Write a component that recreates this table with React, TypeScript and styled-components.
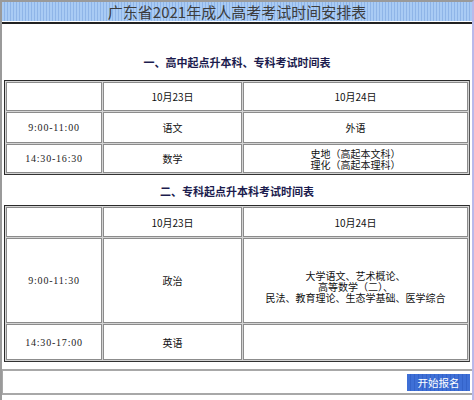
import React from "react";
import styled, { createGlobalStyle } from "styled-components";

const Global = createGlobalStyle`
  html, body { margin: 0; padding: 0; background: #fff; }
  body { font-family: "Noto Sans CJK SC", "Liberation Sans", sans-serif; }
`;

const Frame = styled.div`
  box-sizing: border-box;
  width: 474px;
  height: 400px;
  border-left: 2px solid #9a9a9a;
  border-right: 2px solid #b9b9ea;
  border-top: 2px solid #9a9a9a;
  display: flex;
  flex-direction: column;
  background: #fff;
`;

const TitleBar = styled.div`
  height: 19px;
  background: repeating-linear-gradient(
    90deg,
    #a9cbf4 0px,
    #a9cbf4 2px,
    #8fb5e8 2px,
    #8fb5e8 3px
  );
  border-bottom: 1px solid #fff;
  box-shadow: 0 2px 0 #222;
  margin-bottom: 2px;
  display: flex;
  align-items: center;
  justify-content: center;
  font-size: 15px;
  line-height: 19px;
  color: #3c3c3c;
`;

const Body = styled.div`
  display: flex;
  flex-direction: column;
  padding: 0 2px 0 2px;
  flex: 1;
`;

const Heading = styled.div<{ $top: number; $bottom: number }>`
  margin-top: ${(p) => p.$top}px;
  margin-bottom: ${(p) => p.$bottom}px;
  text-align: center;
  font-size: 11px;
  font-weight: bold;
  line-height: 14px;
  color: #1c1c4e;
`;

const Table = styled.div<{ $rows: string }>`
  display: grid;
  grid-template-columns: 96px 139px 1fr;
  grid-template-rows: ${(p) => p.$rows};
  gap: 1px;
  padding: 1px;
  background: #d4d4d4;
  border: 1px solid #2a2a2a;
  border-right-color: #555;
  border-bottom-color: #333;
`;

const Cell = styled.div<{ $lead?: boolean }>`
  box-sizing: border-box;
  border: 1px solid #8c8c8c;
  background: #fff;
  display: flex;
  flex-direction: column;
  align-items: center;
  justify-content: center;
  text-align: center;
  font-size: 10px;
  line-height: 11px;
  color: #111;
  padding-top: ${(p) => (p.$lead ? "11px" : "0")};
`;

const Line = styled.span`
  display: block;
  height: 11px;
  line-height: 11px;
`;

const Time = styled.span`
  font-family: "Liberation Serif", serif;
  font-size: 10px;
  letter-spacing: 0.8px;
  color: #222;
`;

const BottomBar = styled.div`
  margin-top: 7px;
  margin-left: -2px;
  margin-right: -2px;
  border-top: 2px solid #a8a8a8;
  border-bottom: 2px solid #a8a8a8;
  border-left: 1px solid #a8a8a8;
  height: 22px;
  display: flex;
  align-items: center;
  justify-content: flex-end;
  padding-right: 2px;
`;

const Button = styled.button`
  width: 63px;
  height: 17px;
  border: none;
  padding: 0;
  background: repeating-linear-gradient(
    90deg,
    #3e6fd6 0px,
    #3e6fd6 3px,
    #3463c9 3px,
    #3463c9 4px
  );
  color: #fff;
  font-family: "Noto Sans CJK SC", sans-serif;
  font-size: 10.5px;
  line-height: 17px;
`;

const t1 = [
  ["", "10月23日", "10月24日"],
  ["9:00-11:00", "语文", "外语"],
  ["14:30-16:30", "数学", "史地（高起本文科）\n理化（高起本理科）"],
];

const t2 = [
  ["", "10月23日", "10月24日"],
  ["9:00-11:30", "政治", "大学语文、艺术概论、\n高等数学（二）、\n民法、教育理论、生态学基础、医学综合"],
  ["14:30-17:00", "英语", ""],
];

function renderRows(rows: string[][], leadRow?: number) {
  return rows.flatMap((r, i) =>
    r.map((c, j) => (
      <Cell key={`${i}-${j}`} $lead={leadRow === i && j === 2}>
        {j === 0 && c ? (
          <Time>{c}</Time>
        ) : (
          c.split("\n").map((l, k) => <Line key={k}>{l}</Line>)
        )}
      </Cell>
    ))
  );
}

export default function App() {
  return (
    <>
      <Global />
      <Frame>
        <TitleBar>广东省2021年成人高考考试时间安排表</TitleBar>
        <Body>
          <Heading $top={31} $bottom={11}>
            一、高中起点升本科、专科考试时间表
          </Heading>
          <Table $rows="29px 31px 29px">{renderRows(t1)}</Table>
          <Heading $top={9} $bottom={7}>
            二、专科起点升本科考试时间表
          </Heading>
          <Table $rows="30px 85px 36px">{renderRows(t2, 1)}</Table>
          <BottomBar>
            <Button>开始报名</Button>
          </BottomBar>
        </Body>
      </Frame>
    </>
  );
}
